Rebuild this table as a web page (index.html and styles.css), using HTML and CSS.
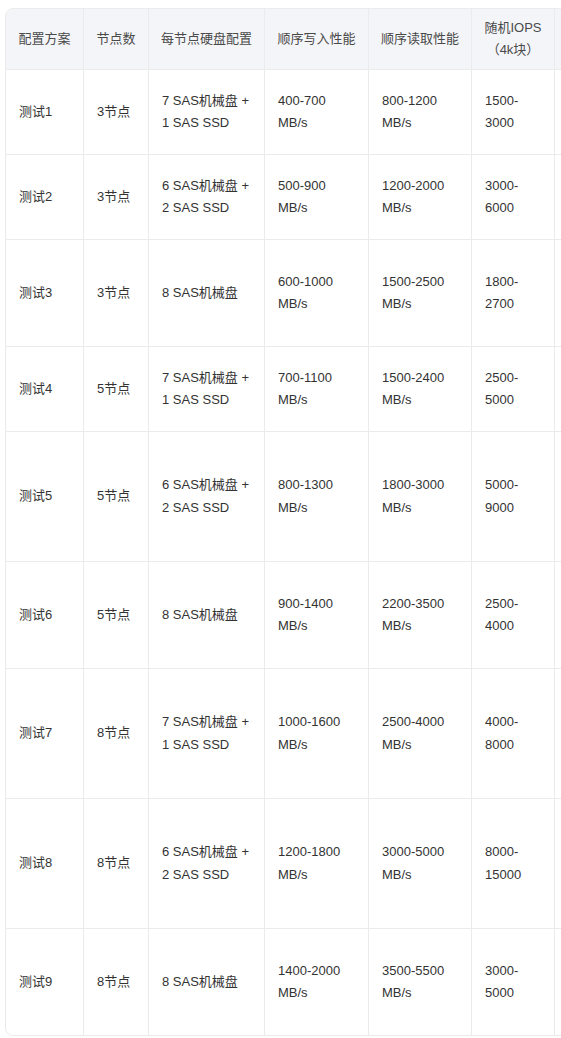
FILE: index.html
```html
<!DOCTYPE html>
<html lang="zh-CN">
<head>
<meta charset="utf-8">
<title>配置方案对比</title>
<link rel="stylesheet" href="styles.css">
</head>
<body>
<div class="table-wrap">
  <table class="spec-table">
    <colgroup>
      <col class="c-name">
      <col class="c-nodes">
      <col class="c-disk">
      <col class="c-write">
      <col class="c-read">
      <col class="c-iops">
      <col class="c-more">
    </colgroup>
    <thead>
      <tr class="head-row">
        <th>配置方案</th>
        <th>节点数</th>
        <th>每节点硬盘配置</th>
        <th>顺序写入性能</th>
        <th>顺序读取性能</th>
        <th>随机IOPS<br>（4k块）</th>
        <th></th>
      </tr>
    </thead>
    <tbody>
      <tr class="lines-3">
        <td>测试1</td><td>3节点</td><td>7 SAS机械盘 + 1 SAS SSD</td><td>400-700 MB/s</td><td>800-1200 MB/s</td><td>1500-3000</td><td></td>
      </tr>
      <tr class="lines-3">
        <td>测试2</td><td>3节点</td><td>6 SAS机械盘 + 2 SAS SSD</td><td>500-900 MB/s</td><td>1200-2000 MB/s</td><td>3000-6000</td><td></td>
      </tr>
      <tr class="lines-4">
        <td>测试3</td><td>3节点</td><td>8 SAS机械盘</td><td>600-1000 MB/s</td><td>1500-2500 MB/s</td><td>1800-2700</td><td></td>
      </tr>
      <tr class="lines-3">
        <td>测试4</td><td>5节点</td><td>7 SAS机械盘 + 1 SAS SSD</td><td>700-1100 MB/s</td><td>1500-2400 MB/s</td><td>2500-5000</td><td></td>
      </tr>
      <tr class="lines-5">
        <td>测试5</td><td>5节点</td><td>6 SAS机械盘 + 2 SAS SSD</td><td>800-1300 MB/s</td><td>1800-3000 MB/s</td><td>5000-9000</td><td></td>
      </tr>
      <tr class="lines-4">
        <td>测试6</td><td>5节点</td><td>8 SAS机械盘</td><td>900-1400 MB/s</td><td>2200-3500 MB/s</td><td>2500-4000</td><td></td>
      </tr>
      <tr class="lines-5">
        <td>测试7</td><td>8节点</td><td>7 SAS机械盘 + 1 SAS SSD</td><td>1000-1600 MB/s</td><td>2500-4000 MB/s</td><td>4000-8000</td><td></td>
      </tr>
      <tr class="lines-5">
        <td>测试8</td><td>8节点</td><td>6 SAS机械盘 + 2 SAS SSD</td><td>1200-1800 MB/s</td><td>3000-5000 MB/s</td><td>8000-15000</td><td></td>
      </tr>
      <tr class="lines-4 last-row">
        <td>测试9</td><td>8节点</td><td>8 SAS机械盘</td><td>1400-2000 MB/s</td><td>3500-5500 MB/s</td><td>3000-5000</td><td></td>
      </tr>
    </tbody>
  </table>
</div>
</body>
</html>
```

FILE: styles.css
```css
html {
  overflow: hidden;
}

body {
  margin: 0;
  background: #ffffff;
  font-family: "Liberation Sans", Arial, "Noto Sans CJK SC", sans-serif;
  font-size: 13px;
  color: #333333;
}

.table-wrap {
  margin: 8px 0 0 5px;
  width: 760px;
  border: 1px solid #ebebeb;
  border-radius: 8px;
  overflow: hidden;
}

.spec-table {
  border-collapse: separate;
  border-spacing: 0;
  table-layout: fixed;
  width: 758px;
}

.c-name { width: 78px; }
.c-nodes { width: 65px; }
.c-disk { width: 116px; }
.c-write { width: 104px; }
.c-read { width: 103px; }
.c-iops { width: 83px; }
.c-more { width: 209px; }

.spec-table th,
.spec-table td {
  box-sizing: border-box;
  padding: 8px 13px;
  line-height: 22.5px;
  border-right: 1px solid #ebebeb;
  border-bottom: 1px solid #ebebeb;
  vertical-align: middle;
}

.spec-table th:last-child,
.spec-table td:last-child {
  border-right: none;
}

.spec-table th {
  background: #f4f5f8;
  font-weight: normal;
  color: #4a4a4a;
  text-align: center;
  line-height: 22px;
  white-space: nowrap;
  padding: 8px 6px;
}

.spec-table td {
  text-align: left;
  color: #333333;
}

.head-row th { height: 61px; }
.lines-3 td { height: 85px; }
.lines-4 td { height: 107px; }
.lines-5 td { height: 130px; }

.last-row td {
  border-bottom: none;
}

.last-row.lines-4 td { height: 106px; }
```
